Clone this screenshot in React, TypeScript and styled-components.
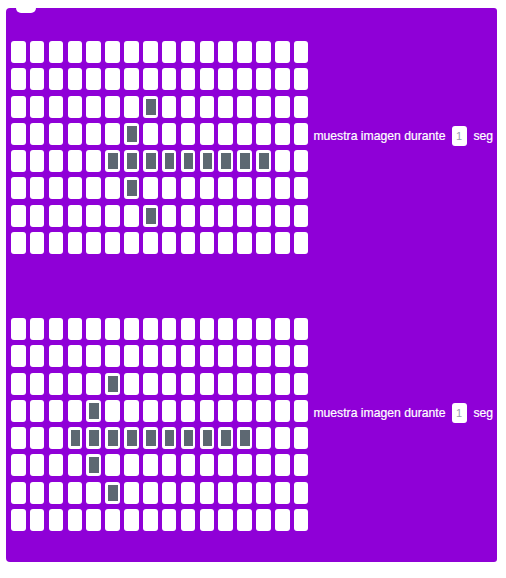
import React from "react";
import styled, { createGlobalStyle } from "styled-components";

const Global = createGlobalStyle`
  html, body { margin: 0; padding: 0; background: #ffffff; }
  body { font-family: "Liberation Sans", Arial, sans-serif; }
`;

const Stack = styled.div`
  display: flex;
  flex-direction: column;
  width: 491px;
  margin: 8px 0 0 6px;
`;

const Block = styled.div<{ $first?: boolean; $last?: boolean }>`
  position: relative;
  display: flex;
  align-items: flex-start;
  gap: 5px;
  height: 277px;
  box-sizing: border-box;
  padding: 33px 0 0 5px;
  background: #8f00d7;
  border-radius: ${(p) => (p.$first ? "4px 3px 0 0" : p.$last ? "0 0 3px 4px" : "0")};
  ${(p) =>
    p.$first
      ? `&::before {
    content: "";
    position: absolute;
    top: 0;
    left: 10px;
    width: 20px;
    height: 5px;
    background: #ffffff;
    border-radius: 0 0 9px 9px;
  }`
      : ""}
  ${(p) =>
    p.$last
      ? `&::after {
    content: "";
    position: absolute;
    bottom: -5px;
    left: 10px;
    width: 20px;
    height: 5px;
    background: #8f00d7;
    border-radius: 0 0 7px 7px;
  }`
      : ""}
`;

const Grid = styled.div`
  display: grid;
  grid-template-columns: repeat(16, 14.5px);
  grid-auto-rows: 22px;
  column-gap: 4.37px;
  row-gap: 5.3px;
`;

const Cell = styled.div<{ $on: boolean }>`
  box-sizing: border-box;
  background: ${(p) => (p.$on ? "#5d6872" : "#ffffff")};
  border: ${(p) => (p.$on ? "3px solid #ffffff" : "none")};
  border-left-width: ${(p) => (p.$on ? "3px" : "0")};
  border-right-width: ${(p) => (p.$on ? "2px" : "0")};
  border-radius: 3px;
`;

const Label = styled.div`
  display: flex;
  align-items: center;
  height: 22px;
  margin-top: 84px;
  color: #ffffff;
  font-size: 12.2px;
  white-space: nowrap;
  -webkit-text-stroke: 0.2px #ffffff;
`;

const Input = styled.span`
  display: inline-flex;
  align-items: center;
  justify-content: center;
  width: 15px;
  height: 20px;
  margin: 0 7px 0 6px;
  background: #ffffff;
  border-radius: 3px;
  color: #9aa0ad;
  font-size: 11px;
  -webkit-text-stroke: 0;
`;

type Pattern = number[][];

const makePattern = (lit: [number, number][]): Pattern => {
  const g = Array.from({ length: 8 }, () => Array(16).fill(0));
  lit.forEach(([r, c]) => (g[r][c] = 1));
  return g;
};

const range = (a: number, b: number) =>
  Array.from({ length: b - a + 1 }, (_, i) => a + i);

const p1 = makePattern([
  [2, 7],
  [3, 6],
  ...range(5, 13).map((c) => [4, c] as [number, number]),
  [5, 6],
  [6, 7],
]);

const p2 = makePattern([
  [2, 5],
  [3, 4],
  ...range(3, 12).map((c) => [4, c] as [number, number]),
  [5, 4],
  [6, 5],
]);

const Matrix = ({ pattern }: { pattern: Pattern }) => (
  <Grid>
    {pattern.flatMap((row, r) =>
      row.map((v, c) => <Cell key={`${r}-${c}`} $on={v === 1} />)
    )}
  </Grid>
);

export default function App() {
  return (
    <>
      <Global />
      <Stack>
        <Block $first>
          <Matrix pattern={p1} />
          <Label>
            muestra imagen durante<Input>1</Input>seg
          </Label>
        </Block>
        <Block $last>
          <Matrix pattern={p2} />
          <Label>
            muestra imagen durante<Input>1</Input>seg
          </Label>
        </Block>
      </Stack>
    </>
  );
}
